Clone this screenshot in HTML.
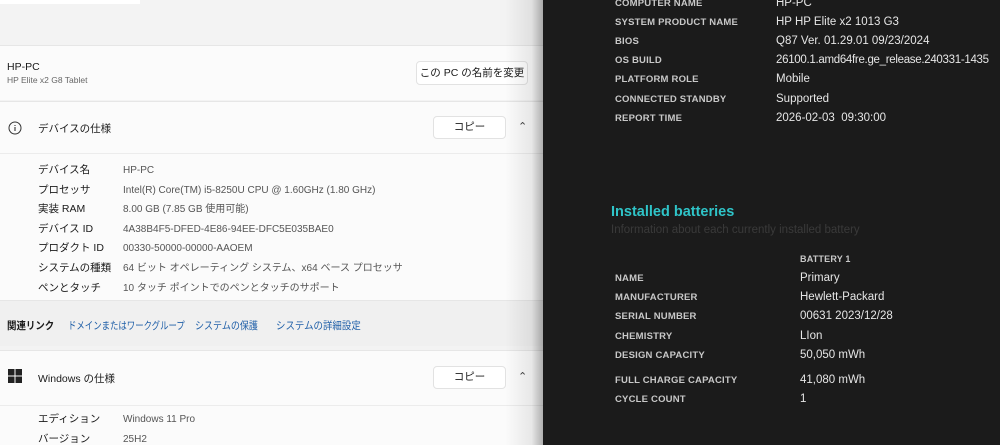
<!DOCTYPE html>
<html><head><meta charset="utf-8"><style>
*{margin:0;padding:0;box-sizing:border-box}
body{width:1000px;height:445px;overflow:hidden;position:relative;background:#1b1b1b;font-family:"Liberation Sans","Noto Sans CJK JP",sans-serif}
#L{position:absolute;left:0;top:0;width:543px;height:445px;background:#f3f3f3;overflow:hidden}
.a{position:absolute;white-space:nowrap}
.card{position:absolute;left:0;width:543px;background:#fbfbfb;border-top:1px solid #e6e6e6}
.btn{position:absolute;background:#fff;border:1px solid #e2e2e2;border-radius:4px;font-size:10.5px;color:#1a1a1a;text-align:center}
.k{font-size:10.5px;color:#1a1a1a}
.v{font-size:10px;color:#555}
.sh{position:absolute;left:505px;top:0;width:38px;height:445px;background:linear-gradient(90deg,rgba(0,0,0,0),rgba(0,0,0,.08) 70%,rgba(0,0,0,.3))}
.rk{position:absolute;left:615px;font-size:9.5px;font-weight:bold;color:#c8c8c8;letter-spacing:.2px;white-space:nowrap}
.rv{position:absolute;left:776px;font-size:11.5px;color:#e6e6e6;white-space:nowrap}
.lk{position:absolute;top:318px;font-size:10.5px;color:#1f5fa8;white-space:nowrap;transform-origin:0 0;transform:scaleX(.8)}
</style></head><body>
<div id="L">
<div class="a" style="left:0;top:0;width:140px;height:4px;background:#fff"></div>
<div class="card" style="top:45px;height:55px"></div>
<div class="a" style="left:7px;top:61px;font-size:10.5px;color:#1a1a1a">HP-PC</div>
<div class="a" style="left:7px;top:75px;font-size:8.5px;color:#666">HP Elite x2 G8 Tablet</div>
<div class="btn" style="left:416px;top:61px;width:112px;height:24px;line-height:22px">この PC の名前を変更</div>
<div class="card" style="top:101px;height:52px"></div>
<svg class="a" style="left:8px;top:121px" width="14" height="14" viewBox="0 0 14 14"><circle cx="7" cy="7" r="6" fill="none" stroke="#333" stroke-width="1"/><path d="M7 6v4M7 4v1" stroke="#333" stroke-width="1.1"/></svg>
<div class="a k" style="left:38px;top:121px">デバイスの仕様</div>
<div class="btn" style="left:433px;top:116px;width:73px;height:23px;line-height:21px">コピー</div>
<div class="a" style="left:518px;top:120px;font-size:11px;color:#444">&#8963;</div>
<div class="card" style="top:153px;height:147px;border-top:1px solid #ececec"></div>
<div class="a k" style="left:38px;top:161px;line-height:19.6px">デバイス名<br>プロセッサ<br>実装 RAM<br>デバイス ID<br>プロダクト ID<br>システムの種類<br>ペンとタッチ</div>
<div class="a v" style="left:123px;top:161px;line-height:19.6px">HP-PC<br>Intel(R) Core(TM) i5-8250U CPU @ 1.60GHz (1.80 GHz)<br>8.00 GB (7.85 GB 使用可能)<br>4A38B4F5-DFED-4E86-94EE-DFC5E035BAE0<br>00330-50000-00000-AAOEM<br>64 ビット オペレーティング システム、x64 ベース プロセッサ<br>10 タッチ ポイントでのペンとタッチのサポート</div>
<div class="a" style="left:0;top:300px;width:543px;height:46px;background:#f0f0f0;border-top:1px solid #e6e6e6"></div>
<div class="a k" style="left:7px;top:318px;font-size:10.5px;font-weight:bold;transform-origin:0 0;transform:scaleX(.9)">関連リンク</div>
<div class="lk" style="left:68px">ドメインまたはワークグループ</div>
<div class="lk" style="left:195px;transform:scaleX(.86)">システムの保護</div>
<div class="lk" style="left:276px;transform:scaleX(.9)">システムの詳細設定</div>
<div class="card" style="top:350px;height:55px"></div>
<svg class="a" style="left:8px;top:369px" width="14" height="14"><rect x="0" y="0" width="6.5" height="6.5" fill="#222"/><rect x="7.5" y="0" width="6.5" height="6.5" fill="#222"/><rect x="0" y="7.5" width="6.5" height="6.5" fill="#222"/><rect x="7.5" y="7.5" width="6.5" height="6.5" fill="#222"/></svg>
<div class="a k" style="left:38px;top:371px">Windows の仕様</div>
<div class="btn" style="left:433px;top:366px;width:73px;height:23px;line-height:21px">コピー</div>
<div class="a" style="left:518px;top:370px;font-size:11px;color:#444">&#8963;</div>
<div class="card" style="top:405px;height:40px;border-top:1px solid #ececec"></div>
<div class="a k" style="left:38px;top:410px;line-height:19.6px">エディション<br>バージョン</div>
<div class="a v" style="left:123px;top:410px;line-height:19.6px">Windows 11 Pro<br>25H2</div>
<div class="sh"></div>
</div>
<div class="rk" style="top:-2px">COMPUTER NAME</div><div class="rv" style="top:-3px">HP-PC</div>
<div class="rk" style="top:17px">SYSTEM PRODUCT NAME</div><div class="rv" style="top:16px">HP HP Elite x2 1013 G3</div>
<div class="rk" style="top:36px">BIOS</div><div class="rv" style="top:35px">Q87 Ver. 01.29.01 09/23/2024</div>
<div class="rk" style="top:55px">OS BUILD</div><div class="rv" style="top:54px;letter-spacing:-.3px">26100.1.amd64fre.ge_release.240331-1435</div>
<div class="rk" style="top:74px">PLATFORM ROLE</div><div class="rv" style="top:73px">Mobile</div>
<div class="rk" style="top:94px">CONNECTED STANDBY</div><div class="rv" style="top:93px">Supported</div>
<div class="rk" style="top:113px">REPORT TIME</div><div class="rv" style="top:112px">2026-02-03&nbsp; 09:30:00</div>
<div class="a" style="left:611px;top:204px;font-size:14.5px;font-weight:bold;color:#2fc4c8">Installed batteries</div>
<div class="a" style="left:611px;top:224px;font-size:11.5px;color:#3a3a3a">Information about each currently installed battery</div>
<div class="rk" style="left:800px;top:254px;font-size:9px">BATTERY 1</div>
<div class="rk" style="top:273px">NAME</div><div class="rv" style="left:800px;top:272px">Primary</div>
<div class="rk" style="top:292px">MANUFACTURER</div><div class="rv" style="left:800px;top:291px">Hewlett-Packard</div>
<div class="rk" style="top:311px">SERIAL NUMBER</div><div class="rv" style="left:800px;top:310px">00631 2023/12/28</div>
<div class="rk" style="top:331px">CHEMISTRY</div><div class="rv" style="left:800px;top:330px">LIon</div>
<div class="rk" style="top:350px">DESIGN CAPACITY</div><div class="rv" style="left:800px;top:349px">50,050 mWh</div>
<div class="rk" style="top:375px">FULL CHARGE CAPACITY</div><div class="rv" style="left:800px;top:374px">41,080 mWh</div>
<div class="rk" style="top:394px">CYCLE COUNT</div><div class="rv" style="left:800px;top:393px">1</div>
</body></html>
